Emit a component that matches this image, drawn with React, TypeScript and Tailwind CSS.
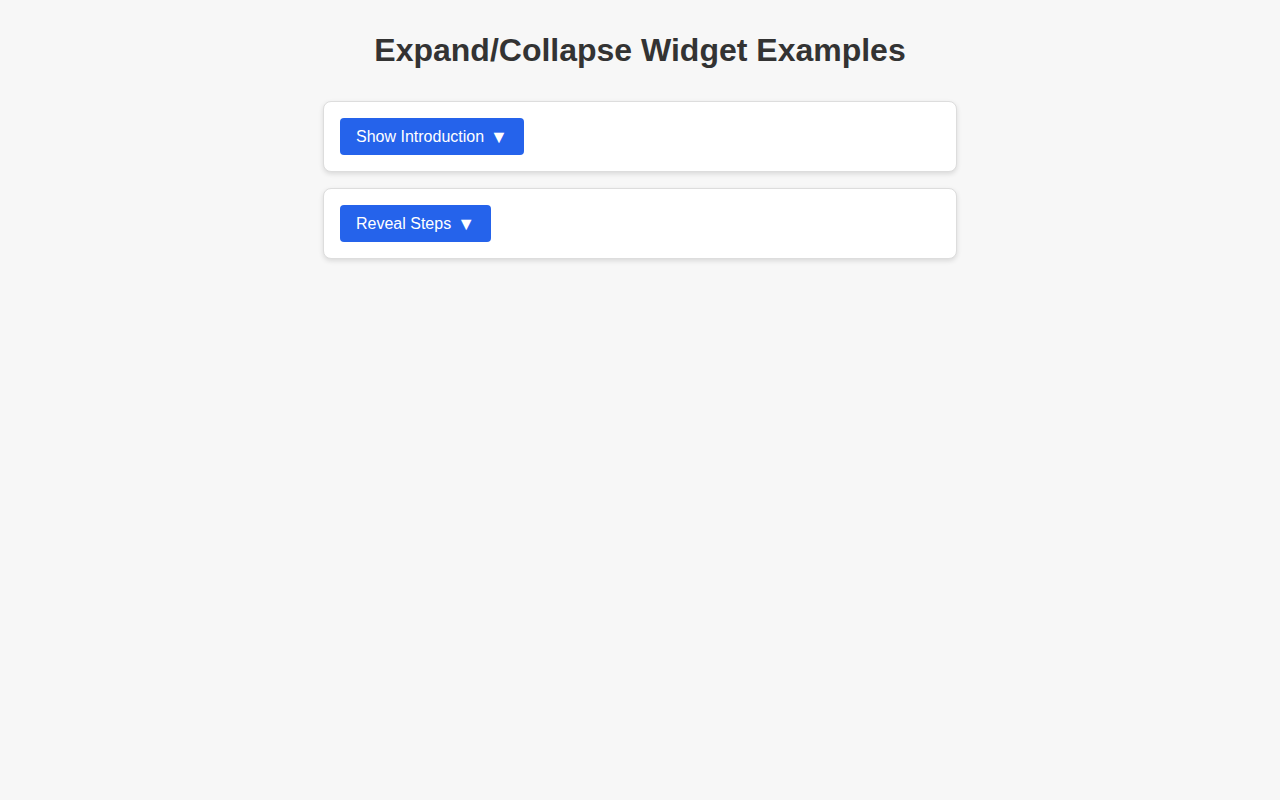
import React, { useState } from "react";

interface ToggleCardProps {
  label: string;
  children: React.ReactNode;
}

const ToggleCard: React.FC<ToggleCardProps> = ({ label, children }) => {
  const [open, setOpen] = useState(false);
  return (
    <div className="bg-white border border-[#dddddd] rounded-lg p-4 shadow-[0_2px_5px_rgba(0,0,0,0.12)]">
      <button
        onClick={() => setOpen(!open)}
        className="flex items-center h-[37px] px-4 bg-[#2563eb] text-white text-[16px] rounded-[4px] cursor-pointer"
      >
        <span>{label}</span>
        <span className="ml-[6px] text-[18px] leading-none">{open ? "▲" : "▼"}</span>
      </button>
      {open && <div className="mt-3 text-[#333] text-[15px]">{children}</div>}
    </div>
  );
};

export default function App() {
  return (
    <div
      className="min-h-screen bg-[#f7f7f7] pt-[32px]"
      style={{ fontFamily: '"Liberation Sans", Arial, Helvetica, sans-serif' }}
    >
      <h1 className="text-center text-[32px] leading-[37px] font-bold text-[#333333] mb-[32px]">
        Expand/Collapse Widget Examples
      </h1>
      <div className="w-[634px] mx-auto flex flex-col gap-4">
        <ToggleCard label="Show Introduction">
          This widget toggles a hidden section of content.
        </ToggleCard>
        <ToggleCard label="Reveal Steps">
          Step 1, step 2, step 3.
        </ToggleCard>
      </div>
    </div>
  );
}
